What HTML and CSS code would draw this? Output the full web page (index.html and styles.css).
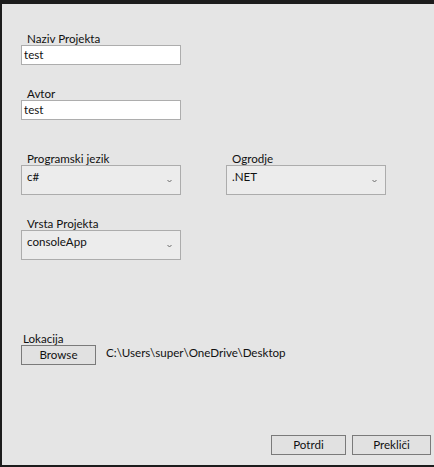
FILE: index.html
```html
<!DOCTYPE html>
<html>
<head>
<meta charset="utf-8">
<link rel="stylesheet" href="styles.css">
</head>
<body>
<div class="window">
  <div class="field f1">
    <label class="lbl">Naziv Projekta</label>
    <div class="input">test</div>
  </div>
  <div class="field f2">
    <label class="lbl">Avtor</label>
    <div class="input">test</div>
  </div>
  <div class="row f3">
    <div class="field">
      <label class="lbl">Programski jezik</label>
      <div class="combo"><span>c#</span><svg class="chev" width="5" height="4" viewBox="0 0 5 4"><path d="M0.5 1 L2.5 3 L4.5 1" fill="none" stroke="#6a6a6a" stroke-width="1"/></svg></div>
    </div>
    <div class="field">
      <label class="lbl">Ogrodje</label>
      <div class="combo"><span>.NET</span><svg class="chev" width="5" height="4" viewBox="0 0 5 4"><path d="M0.5 1 L2.5 3 L4.5 1" fill="none" stroke="#6a6a6a" stroke-width="1"/></svg></div>
    </div>
  </div>
  <div class="field f4">
    <label class="lbl">Vrsta Projekta</label>
    <div class="combo"><span>consoleApp</span><svg class="chev" width="5" height="4" viewBox="0 0 5 4"><path d="M0.5 1 L2.5 3 L4.5 1" fill="none" stroke="#6a6a6a" stroke-width="1"/></svg></div>
  </div>
  <div class="field f5">
    <label class="lbl lok">Lokacija</label>
    <div class="loc-row">
      <div class="btn">Browse</div>
      <span class="path">C:\Users\super\OneDrive\Desktop</span>
    </div>
  </div>
  <div class="actions">
    <div class="btn">Potrdi</div>
    <div class="btn wide">Prekliči</div>
  </div>
</div>
</body>
</html>
```
FILE: styles.css
```css
html, body {
  margin: 0;
  padding: 0;
  background: #e5e5e5;
}
body {
  font-family: "Lato", "Open Sans", sans-serif;
  font-size: 11.6px;
  color: #111;
}
.window {
  box-sizing: border-box;
  width: 434px;
  height: 467px;
  background: #e5e5e5;
  border-top: 4px solid #1c1c1c;
  border-left: 2px solid #1c1c1c;
  border-bottom: 2px solid #1c1c1c;
  padding-left: 19px;
  display: flex;
  flex-direction: column;
}
.field {
  display: flex;
  flex-direction: column;
  width: 160px;
}
.lbl {
  display: block;
  height: 13px;
  line-height: 13px;
  padding-left: 6px;
  white-space: nowrap;
}
.lbl.lok { padding-left: 2px; }
.f1 { margin-top: 28px; }
.f2 { margin-top: 22px; }
.f3 { margin-top: 32px; }
.f4 { margin-top: 22px; }
.f5 { margin-top: 72px; width: auto; }
.row {
  display: flex;
  gap: 45px;
}
.input {
  box-sizing: border-box;
  height: 20px;
  width: 160px;
  background: #fff;
  border: 1px solid #adadad;
  padding-left: 2px;
  line-height: 17px;
}
.combo {
  box-sizing: border-box;
  position: relative;
  height: 30px;
  width: 160px;
  background: #ececec;
  border: 1px solid #acacac;
  padding-left: 5px;
  padding-top: 4px;
  line-height: 14px;
}
.chev {
  position: absolute;
  right: 8px;
  top: 13px;
}
.loc-row {
  display: flex;
  align-items: center;
  gap: 10px;
}
.btn {
  box-sizing: border-box;
  width: 75px;
  height: 20px;
  border: 1px solid #7a7a7a;
  background: #e1e1e1;
  text-align: center;
  line-height: 18px;
}
.path {
  line-height: 14px;
  margin-top: -4px;
}
.actions {
  margin-top: 70px;
  display: flex;
  justify-content: flex-end;
  gap: 6px;
  padding-right: 3px;
}
.btn.wide { width: 79px; }
```
